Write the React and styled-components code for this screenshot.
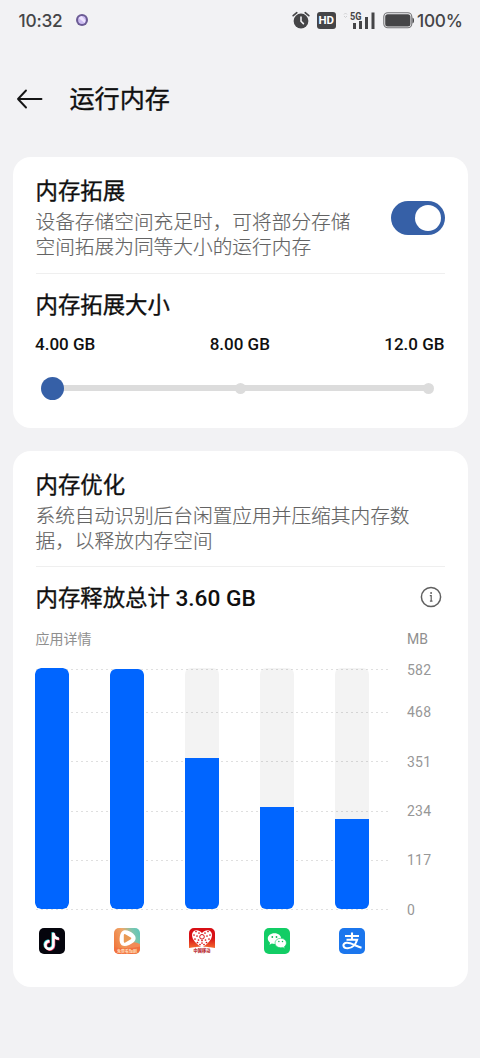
import React from "react";
import styled, { createGlobalStyle } from "styled-components";

const Global = createGlobalStyle`
  * { box-sizing: border-box; }
  body {
    margin: 0;
    background: #f2f2f4;
    font-family: Roboto, "Noto Sans CJK SC", sans-serif;
    color: #101010;
  }
`;

const Screen = styled.div`
  width: 480px;
  height: 1058px;
  overflow: hidden;
  background: #f2f2f4;
  display: flex;
  flex-direction: column;
`;

const StatusBar = styled.div`
  height: 40px;
  padding: 0 17.5px 0 18.5px;
  display: flex;
  align-items: center;
  justify-content: space-between;
  color: #454547;
  font: 500 17.3px/20px Inter, sans-serif;
`;

const StatusGroup = styled.div`
  display: flex;
  align-items: center;
  gap: ${(p) => p.$gap}px;
`;

const StatusText = styled.span`
  padding-top: 1px;
  letter-spacing: ${(p) => p.$track}px;
  white-space: nowrap;
`;

const Header = styled.header`
  height: 117px;
  padding: 0 16px;
  display: flex;
  align-items: center;
  gap: 26.5px;
`;

const PageTitle = styled.h1`
  margin: 0;
  padding-top: 2px;
  font-size: 25.1px;
  font-weight: 400;
  line-height: 30px;
  -webkit-text-stroke: 0.35px currentColor;
`;

const Card = styled.section`
  height: ${(p) => p.$height}px;
  margin: 0 12.5px 22.5px;
  padding: 21px 22.5px 0 23px;
  border-radius: 18px;
  background: #fff;
`;

const Row = styled.div`
  display: flex;
  align-items: center;
  justify-content: space-between;
`;

const Heading = styled.h2`
  margin: 0;
  font-size: 22.4px;
  font-weight: 400;
  line-height: 27px;
  white-space: nowrap;
  -webkit-text-stroke: 0.35px currentColor;
`;

const Amount = styled.span`
  font-size: 22.7px;
  font-weight: 500;
  -webkit-text-stroke: 0;
`;

const Description = styled.p`
  margin: 5px 0 0;
  width: ${(p) => p.$width}px;
  font-size: 19.7px;
  font-weight: 300;
  line-height: 25.3px;
  color: #636363;
  -webkit-text-stroke: 0.15px currentColor;
`;

const Divider = styled.div`
  height: 1px;
  margin: 12px 0 18px;
  background: #efefef;
`;

const Toggle = styled.div`
  width: 54px;
  height: 34px;
  margin-bottom: 3px;
  padding: 4px;
  border-radius: 17px;
  background: #3660a7;
  display: flex;
  justify-content: flex-end;
`;

const ToggleKnob = styled.div`
  width: 26px;
  height: 26px;
  border-radius: 50%;
  background: #fff;
`;

const SizeLabels = styled(Row)`
  margin: 15px 0.5px 0 -0.5px;
  font-size: 17px;
  font-weight: 500;
  line-height: 20px;
`;

const Slider = styled.div`
  margin: 22px 5.5px 0 5px;
  height: 25px;
  display: grid;
  align-items: center;
  > * { grid-area: 1 / 1; }
`;

const Track = styled.div`
  height: 6px;
  margin: 0 11px;
  background: #dcdcdc;
`;

const Stops = styled.div`
  display: flex;
  align-items: center;
  justify-content: space-between;
`;

const Stop = styled.div`
  width: 23px;
  display: flex;
  justify-content: center;
  &::before {
    content: "";
    width: ${(p) => (p.$active ? 23 : 11)}px;
    height: ${(p) => (p.$active ? 23 : 11)}px;
    border-radius: 50%;
    background: ${(p) => (p.$active ? "#3660a7" : "#dcdcdc")};
  }
`;

const Caption = styled.div`
  display: grid;
  grid-template-columns: 1fr 38px;
  margin-top: 17px;
  font-size: 14px;
  line-height: 20px;
  color: #8f8f8f;
`;

const Chart = styled.div`
  margin-top: 19px;
  height: 242px;
  display: grid;
  > * { grid-area: 1 / 1; }
`;

const Scale = styled.div`
  padding-top: 1px;
  display: flex;
  flex-direction: column;
`;

const Tick = styled.div`
  height: ${(p) => p.$height}px;
  display: grid;
  grid-template-columns: 354px 1fr;
  column-gap: 17.5px;
  align-items: start;
`;

const TickLabel = styled.span`
  margin-top: -9.5px;
  font-size: 14px;
  line-height: 20px;
  letter-spacing: 0.2px;
  color: #979797;
`;

const TickLine = styled.div`
  height: 1px;
  background: repeating-linear-gradient(90deg, #dfdfdf 0 2px, transparent 2px 5px);
`;

const Bars = styled.div`
  display: flex;
  gap: 41px;
  height: 241px;
  margin-left: -0.5px;
`;

const Bar = styled.div`
  width: 34px;
  border-radius: 6px;
  overflow: hidden;
  background: ${(p) => (p.$empty ? "transparent" : "rgba(0, 0, 0, 0.047)")};
  display: flex;
  align-items: flex-end;
`;

const BarFill = styled.div`
  width: 100%;
  border-radius: ${(p) => (p.$full ? "6px" : "0")};
  background: #0065ff;
`;

const Apps = styled.div`
  display: flex;
  gap: 47px;
  margin: 17px 0 0 2.5px;
  > svg { display: block; flex: none; }
`;

const NotifyIcon = () => (
  <svg width="14" height="14" viewBox="0 0 14 14">
    <circle cx="7" cy="7" r="6" fill="#6b5b94" />
    <circle cx="7" cy="7" r="3.9" fill="#cdbdf2" />
    <path d="M3.6 5 6.5 3l4 4.2L9.6 10z" fill="#eee4ff" />
  </svg>
);

const AlarmIcon = () => (
  <svg width="18" height="18" viewBox="0 0 18 18">
    <circle cx="9" cy="10" r="7.4" fill="#454547" />
    <path d="M1.2 4.6 4.8 1.7M16.8 4.6l-3.6-2.9" stroke="#454547" strokeWidth="1.7" strokeLinecap="round" />
    <path d="M9 6v4.2l2.4 2.4" fill="none" stroke="#f2f2f4" strokeWidth="1.6" strokeLinecap="round" />
  </svg>
);

const HdBadge = styled.span`
  width: 18.5px;
  height: 17px;
  border-radius: 3px;
  background: #454547;
  color: #fff;
  font: 700 11.5px/17.5px Roboto, sans-serif;
  text-align: center;
`;

const Signal = () => (
  <svg width="33" height="19" viewBox="0 0 33 19">
    <path d="M1 3.5 2.5 2 4 3.500M1 5l1.500 1.500L4 5" fill="none" stroke="#cfcfd1" />
    <text x="7" y="8.500" fontSize="10" fontWeight="700" fontFamily="Roboto, sans-serif" fill="#454547" textLength="11.500" lengthAdjust="spacingAndGlyphs">5G</text>
    <path d="M10 12h3v6h-3zM16 10h3v8h-3zM22 6h3v12h-3zM28.500 1.500h3V18h-3z" fill="#454547" />
  </svg>
);

const Battery = () => (
  <svg width="32" height="17" viewBox="0 0 32 17">
    <rect x="0.8" y="0.8" width="28" height="15" rx="4" fill="none" stroke="#727274" strokeWidth="1.1" />
    <rect x="2.2" y="2.2" width="25.200" height="12.200" rx="2.5" fill="#454547" />
    <path d="M29.5 5.5c2 .5 2 5.5 0 6z" fill="#454547" />
  </svg>
);

const BackArrow = () => (
  <svg width="27" height="22" viewBox="0 0 27 22">
    <path d="M10 2.5 2 11l8 8.5M2 11h23.5" fill="none" stroke="#151515" strokeWidth="1.9" strokeLinecap="round" strokeLinejoin="round" />
  </svg>
);

const InfoMark = styled.svg`
  margin: 0 3px 3px 0;
`;

const InfoIcon = () => (
  <InfoMark width="22" height="22" viewBox="0 0 22 22">
    <circle cx="11" cy="11" r="9.6" fill="none" stroke="#606060" strokeWidth="1.5" />
    <path d="M9.8 9.6h1.400v5.600M9.900 15.200h2.600" fill="none" stroke="#606060" strokeWidth="1.2" />
    <circle cx="11.1" cy="7" r="0.95" fill="#606060" />
  </InfoMark>
);

const DouyinIcon = () => (
  <svg width="28" height="28" viewBox="0 0 28 28">
    <rect x="1" y="1" width="26" height="26" rx="5" fill="#05050d" />
    <g fill="none" strokeWidth="2.6">
      <path d="M14.700 5.300v12.300a4 4 0 1 1-4-4M14.700 6c.3 3 2.400 5 5.500 5.200" stroke="#33d9dc" />
      <path d="M16 6.300v12.300a4 4 0 1 1-4-4M16 7c.3 3 2.400 5 5.500 5.200" stroke="#ef3d62" />
      <path d="M15.400 5.800v12.300a4 4 0 1 1-4-4M15.400 6.500c.3 3 2.400 5 5.500 5.200" stroke="#fff" />
    </g>
  </svg>
);

const VideoIcon = () => (
  <svg width="28" height="28" viewBox="0 0 28 28">
    <defs>
      <linearGradient id="video" x1="0" y1="0.7" x2="1" y2="0.3">
        <stop offset="0" stopColor="#f1763b" />
        <stop offset="0.5" stopColor="#eea86a" />
        <stop offset="0.8" stopColor="#81c5ac" />
        <stop offset="1" stopColor="#64c6b7" />
      </linearGradient>
      <clipPath id="video-clip"><rect x="1" y="1" width="26" height="26" rx="5" /></clipPath>
    </defs>
    <g clipPath="url(#video-clip)">
      <path d="M1 1h26v26H1z" fill="url(#video)" />
      <path d="M15 16q7-2 12 1v5H13z" fill="#f28b57" />
      <path d="M1 20.500c8 1 18 1 26-1V27H1z" fill="#f2713f" />
      <path d="M9 4.600c2.500-2.600 8-.8 11 2 3.500 3.100 3.500 6.400.3 8.900-3.300 2.700-8.600 4.600-11.600 2.700-3.100-2-2.500-10.700.3-13.600z" fill="#fff" />
      <path d="M11.800 8 17.300 11.300l-5.500 3.400z" fill="#e99a55" stroke="#e99a55" strokeWidth="2" strokeLinejoin="round" />
      <text x="14" y="25.500" textAnchor="middle" fontSize="4" fontWeight="700" fontFamily="'Noto Sans CJK SC', sans-serif" fill="#ffdcb8">免费看短剧</text>
    </g>
  </svg>
);

const HEART = [
  [8, 4.5], [11, 6], [6, 8], [9, 9], [7, 12], [10.5, 13], [9.5, 15.5],
  [20, 4.5], [17, 6], [22, 8], [19, 9], [21, 12], [17.5, 13], [18.5, 15.5],
  [14, 13.5], [14, 16], [12, 17.5], [16, 17.5],
];

const HeartIcon = () => (
  <svg width="28" height="28" viewBox="0 0 28 28">
    <defs>
      <linearGradient id="heart" x1="0" y1="0" x2="0" y2="1">
        <stop offset="0.5" stopColor="#d80f15" />
        <stop offset="1" stopColor="#f36a2f" />
      </linearGradient>
    </defs>
    <path d="M1 6a5 5 0 0 1 5-5h16a5 5 0 0 1 5 5v15q-13-3-26 0z" fill="url(#heart)" />
    <path d="M14 20.500C9 17.500 4 13 4 8 4 3 10 1.500 14 6c4-4.500 10-3 10 2 0 5-5 9.500-10 12.500z" fill="#fff" />
    {HEART.map(([x, y]) => <circle key={`${x}-${y}`} cx={x} cy={y} r="0.85" fill="#d80f15" />)}
    <circle cx="14" cy="9.8" r="2.3" fill="none" stroke="#d80f15" strokeWidth="1" />
    <text x="14" y="25.2" textAnchor="middle" fontSize="4.200" fontWeight="900" fontFamily="'Noto Sans CJK SC', sans-serif" fill="#b52129">中国移动</text>
  </svg>
);

const WechatIcon = () => (
  <svg width="28" height="28" viewBox="0 0 28 28">
    <rect x="1" y="1" width="26" height="26" rx="5" fill="#12cd65" />
    <path d="M11.5 6.2c-4 0-6.7 2.500-6.700 5.400 0 1.700.9 3.200 2.300 4.200l-.6 2 2.300-1.200c.9.300 1.800.4 2.700.4 3.900 0 6.700-2.500 6.700-5.400s-2.800-5.400-6.700-5.400z" fill="#fff" />
    <path d="M17.700 11.300c-3.300 0-5.700 2.100-5.700 4.700s2.400 4.700 5.700 4.700c.8 0 1.500-.1 2.200-.3l2 1-.5-1.800c1.200-.9 2-2.100 2-3.600 0-2.600-2.400-4.700-5.700-4.700z" fill="#fff" stroke="#12cd65" strokeWidth="0.6" />
    <g fill="#12b65a">
      <circle cx="9.3" cy="10" r="0.9" /><circle cx="13.5" cy="10" r="0.9" />
      <circle cx="15.9" cy="14.5" r="0.75" /><circle cx="19.5" cy="14.5" r="0.75" />
    </g>
  </svg>
);

const AlipayIcon = () => (
  <svg width="28" height="28" viewBox="0 0 28 28">
    <rect x="1" y="1" width="26" height="26" rx="5" fill="#1b76ed" />
    <g fill="none" stroke="#fff" strokeWidth="2.1">
      <path d="M7 9h14M14 5.500v7M8.500 12.800h10.600c-1.200 4.200-4.500 8.500-9.300 8.500-5.500 0-5.800-5.300-1-5.500 4.200-.2 8.500 3 14.700 4.900" />
    </g>
  </svg>
);

const TICKS = [
  ["582", 42.5], ["468", 49.5], ["351", 49.5], ["234", 49], ["117", 49.5], ["0", 1],
];
const BARS = [241, 240, 151, 102, 90.5];

export default function App() {
  return (
    <Screen>
      <Global />
      <StatusBar>
        <StatusGroup $gap={12}>
          <StatusText $track={-0.2}>10:32</StatusText>
          <NotifyIcon />
        </StatusGroup>
        <StatusGroup $gap={7}>
          <AlarmIcon />
          <HdBadge>HD</HdBadge>
          <Signal />
          <StatusGroup $gap={2.5}>
            <Battery />
            <StatusText $track={-0.3}>100%</StatusText>
          </StatusGroup>
        </StatusGroup>
      </StatusBar>
      <Header>
        <BackArrow />
        <PageTitle>运行内存</PageTitle>
      </Header>
      <Card $height={271}>
        <Row>
          <div>
            <Heading>内存拓展</Heading>
            <Description $width={324}>设备存储空间充足时，可将部分存储空间拓展为同等大小的运行内存</Description>
          </div>
          <Toggle><ToggleKnob /></Toggle>
        </Row>
        <Divider />
        <Heading>内存拓展大小</Heading>
        <SizeLabels>
          <span>4.00 GB</span>
          <span>8.00 GB</span>
          <span>12.0 GB</span>
        </SizeLabels>
        <Slider>
          <Track />
          <Stops><Stop $active /><Stop /><Stop /></Stops>
        </Slider>
      </Card>
      <Card $height={536.5}>
        <Heading>内存优化</Heading>
        <Description $width={390}>系统自动识别后台闲置应用并压缩其内存数据，以释放内存空间</Description>
        <Divider />
        <Row>
          <Heading>内存释放总计 <Amount>3.60 GB</Amount></Heading>
          <InfoIcon />
        </Row>
        <Caption><span>应用详情</span><span>MB</span></Caption>
        <Chart>
          <Scale>
            {TICKS.map(([label, height]) => (
              <Tick key={label} $height={height}>
                <TickLine />
                <TickLabel>{label}</TickLabel>
              </Tick>
            ))}
          </Scale>
          <Bars>
            {BARS.map((h) => (
              <Bar key={h} $empty={h >= 240}>
                <BarFill $full={h >= 240} style={{ height: h }} />
              </Bar>
            ))}
          </Bars>
        </Chart>
        <Apps>
          <DouyinIcon />
          <VideoIcon />
          <HeartIcon />
          <WechatIcon />
          <AlipayIcon />
        </Apps>
      </Card>
    </Screen>
  );
}
